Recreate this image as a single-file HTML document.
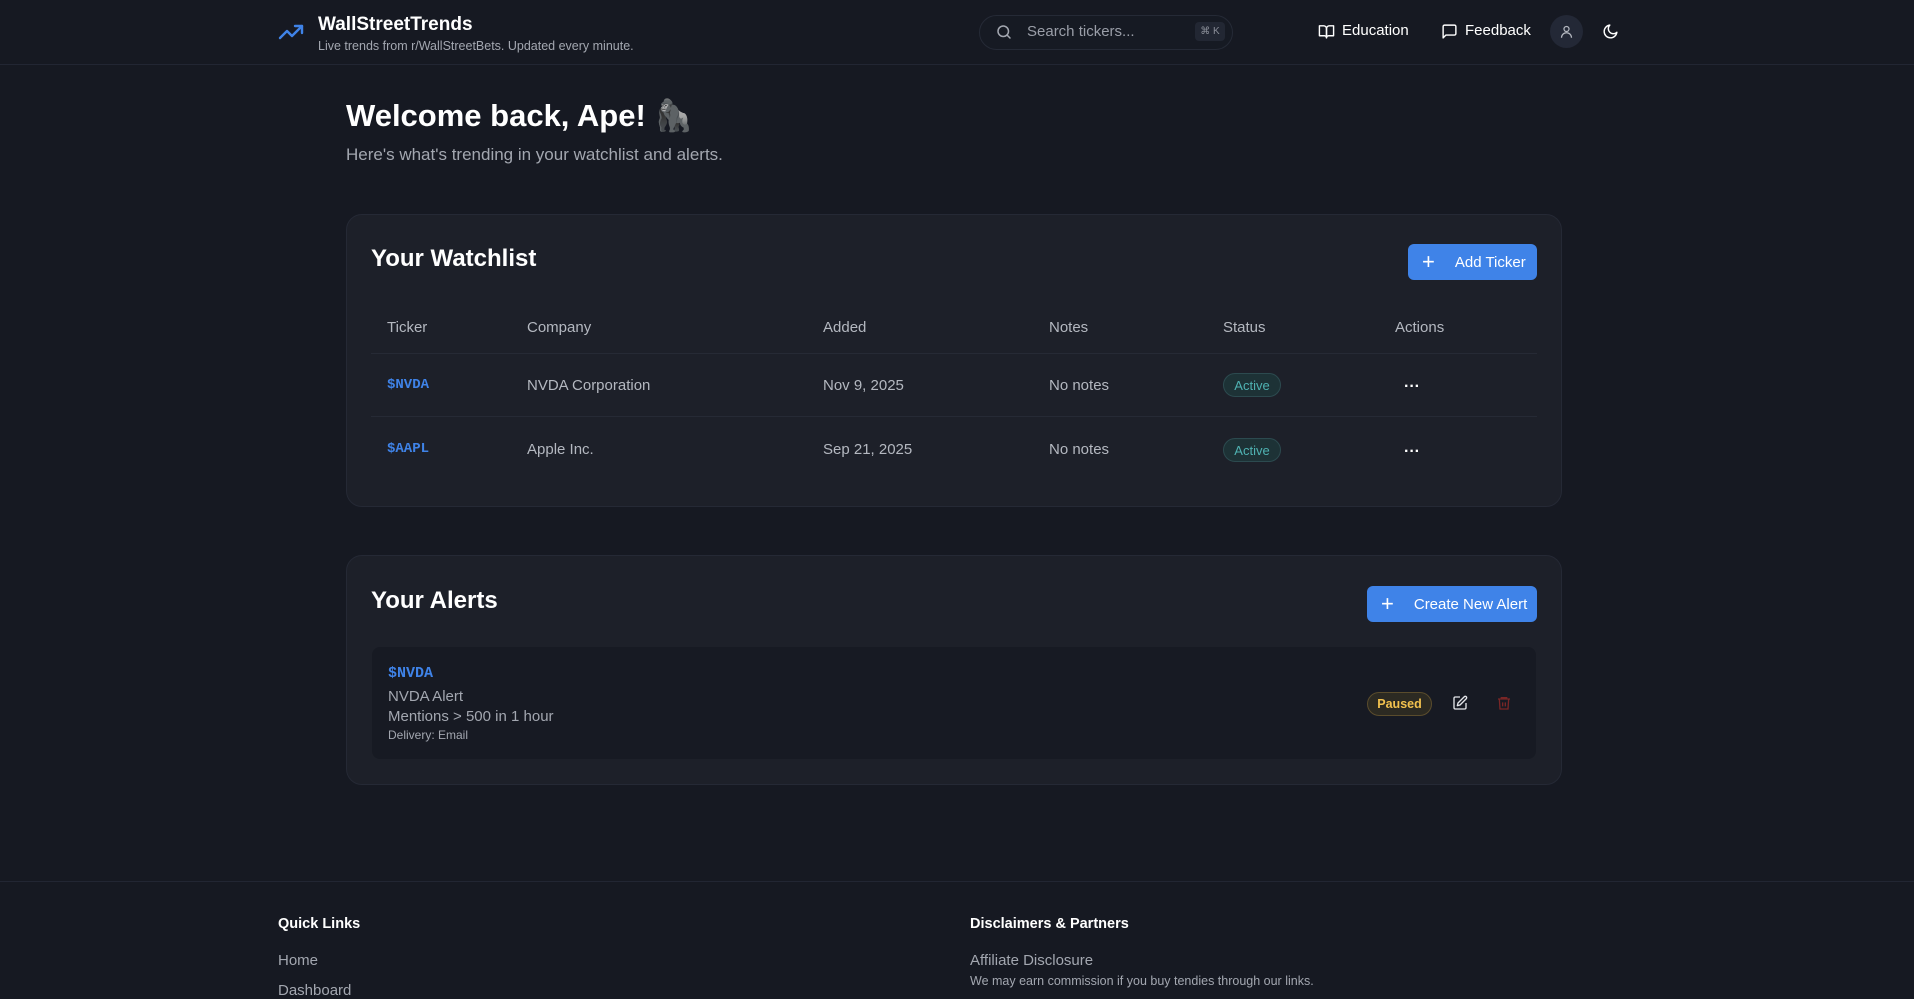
<!DOCTYPE html>
<html><head><meta charset="utf-8"><style>
*{margin:0;padding:0;box-sizing:border-box}
body{width:1914px;height:992px;overflow:hidden;background:#161922;font-family:"Liberation Sans",sans-serif;color:#e5e7eb;position:relative}
.a{position:absolute;white-space:nowrap}
.card{position:absolute;background:#1d2029;border:1px solid #252935;border-radius:16px}
.btn{position:absolute;background:#3f83e8;border-radius:6px;color:#fff;font-size:15px;display:flex;align-items:center}
.th{color:#b4b8c0;font-size:15px}
.td{color:#b4b8c0;font-size:15px}
.tk{color:#3f83e8;font-family:"Liberation Mono",monospace;font-weight:bold;font-size:14px}
.badge{position:absolute;height:24px;border-radius:12px;font-size:13px;display:flex;align-items:center;justify-content:center}
.act{background:#1d3236;border:1px solid #2c4a4f;color:#4fb2b2;width:58px}
.line{position:absolute;height:1px;background:#262a35}
</style></head><body>
<div class="line" style="left:0;top:64px;width:1914px;background:#222633"></div>
<svg class="a" style="left:278px;top:22px" width="28" height="20" viewBox="0 0 28 20" fill="none" stroke="#3f83e8" stroke-width="2.4" stroke-linecap="round" stroke-linejoin="round"><path d="M2 16l7-7 5 5 10-10"/><path d="M17 4h7v7"/></svg>
<div class="a" style="left:318px;top:14px;font-size:19px;font-weight:bold;color:#fff">WallStreetTrends</div>
<div class="a" style="left:318px;top:39px;font-size:12.5px;color:#a3a7b0">Live trends from r/WallStreetBets. Updated every minute.</div>
<div class="a" style="left:979px;top:15px;width:254px;height:35px;border:1px solid #252a36;border-radius:18px;background:#161a23"></div>
<svg class="a" style="left:995px;top:23px" width="18" height="18" viewBox="0 0 24 24" fill="none" stroke="#a3a7b0" stroke-width="2" stroke-linecap="round"><circle cx="11" cy="11" r="7"/><path d="M20 20l-4-4"/></svg>
<div class="a" style="left:1027px;top:23px;font-size:15px;color:#9a9ea8">Search tickers...</div>
<div class="a" style="left:1195px;top:22px;width:30px;height:19px;background:#222733;border-radius:4px;font-size:10px;color:#8a8e98;text-align:center;line-height:19px">⌘ K</div>
<svg class="a" style="left:1318px;top:23px" width="17" height="17" viewBox="0 0 24 24" fill="none" stroke="#fff" stroke-width="2" stroke-linejoin="round"><path d="M2 4h6a4 4 0 0 1 4 4v13a3 3 0 0 0-3-3H2z"/><path d="M22 4h-6a4 4 0 0 0-4 4v13a3 3 0 0 1 3-3h7z"/></svg>
<div class="a" style="left:1342px;top:22px;font-size:15px;color:#fff">Education</div>
<svg class="a" style="left:1441px;top:23px" width="17" height="17" viewBox="0 0 24 24" fill="none" stroke="#fff" stroke-width="2" stroke-linejoin="round"><path d="M21 15a2 2 0 0 1-2 2H7l-4 4V5a2 2 0 0 1 2-2h14a2 2 0 0 1 2 2z"/></svg>
<div class="a" style="left:1465px;top:22px;font-size:15px;color:#fff">Feedback</div>
<div class="a" style="left:1550px;top:15px;width:33px;height:33px;border-radius:50%;background:#232836"></div>
<svg class="a" style="left:1559px;top:24px" width="15" height="15" viewBox="0 0 24 24" fill="none" stroke="#b4b8c0" stroke-width="2"><circle cx="12" cy="8" r="4"/><path d="M4 22a8 8 0 0 1 16 0"/></svg>
<svg class="a" style="left:1602px;top:23px" width="17" height="17" viewBox="0 0 24 24" fill="none" stroke="#fff" stroke-width="2" stroke-linejoin="round"><path d="M21 13A9 9 0 1 1 11 3a7 7 0 0 0 10 10z"/></svg>
<div class="a" style="left:346px;top:97px;font-size:31px;font-weight:bold;color:#fff">Welcome back, Ape! 🦍</div>
<div class="a" style="left:346px;top:145px;font-size:17px;color:#a3a7b0">Here's what's trending in your watchlist and alerts.</div>
<div class="card" style="left:346px;top:214px;width:1216px;height:293px"></div>
<div class="a" style="left:371px;top:245px;font-size:24px;font-weight:bold;color:#fff">Your Watchlist</div>
<div class="btn" style="left:1408px;top:244px;width:129px;height:36px"><span style="margin-left:14px;font-size:22px;font-weight:300">+</span><span style="margin-left:20px">Add Ticker</span></div>
<div class="a th" style="left:387px;top:319px">Ticker</div>
<div class="a th" style="left:527px;top:319px">Company</div>
<div class="a th" style="left:823px;top:319px">Added</div>
<div class="a th" style="left:1049px;top:319px">Notes</div>
<div class="a th" style="left:1223px;top:319px">Status</div>
<div class="a th" style="left:1395px;top:319px">Actions</div>
<div class="line" style="left:371px;top:353px;width:1166px"></div>
<div class="line" style="left:371px;top:416px;width:1166px"></div>
<div class="a tk" style="left:387px;top:377px">$NVDA</div>
<div class="a td" style="left:527px;top:377px">NVDA Corporation</div>
<div class="a td" style="left:823px;top:377px">Nov 9, 2025</div>
<div class="a td" style="left:1049px;top:377px">No notes</div>
<div class="badge act" style="left:1223px;top:373px">Active</div>
<div class="a" style="left:1404px;top:378px;font-size:16px;font-weight:bold;color:#fff">···</div>
<div class="a tk" style="left:387px;top:441px">$AAPL</div>
<div class="a td" style="left:527px;top:441px">Apple Inc.</div>
<div class="a td" style="left:823px;top:441px">Sep 21, 2025</div>
<div class="a td" style="left:1049px;top:441px">No notes</div>
<div class="badge act" style="left:1223px;top:438px">Active</div>
<div class="a" style="left:1404px;top:443px;font-size:16px;font-weight:bold;color:#fff">···</div>
<div class="card" style="left:346px;top:555px;width:1216px;height:230px"></div>
<div class="a" style="left:371px;top:587px;font-size:24px;font-weight:bold;color:#fff">Your Alerts</div>
<div class="btn" style="left:1367px;top:586px;width:170px;height:36px"><span style="margin-left:14px;font-size:22px;font-weight:300">+</span><span style="margin-left:20px">Create New Alert</span></div>
<div class="a" style="left:372px;top:647px;width:1164px;height:112px;background:#171a23;border-radius:8px"></div>
<div class="a" style="left:388px;top:665px;font-size:15px;font-weight:bold;color:#3f83e8;font-family:'Liberation Mono',monospace">$NVDA</div>
<div class="a" style="left:388px;top:688px;font-size:15px;color:#a3a7b0">NVDA Alert</div>
<div class="a" style="left:388px;top:708px;font-size:15px;color:#a3a7b0">Mentions &gt; 500 in 1 hour</div>
<div class="a" style="left:388px;top:728px;font-size:12px;color:#a3a7b0">Delivery: Email</div>
<div class="badge" style="left:1367px;top:692px;width:65px;background:#2c2a22;border:1px solid #5a4c2c;color:#f2c14e;font-weight:bold;font-size:12.5px">Paused</div>
<svg class="a" style="left:1452px;top:695px" width="16" height="16" viewBox="0 0 24 24" fill="none" stroke="#e5e7eb" stroke-width="2" stroke-linejoin="round"><path d="M12 3H5a2 2 0 0 0-2 2v14a2 2 0 0 0 2 2h14a2 2 0 0 0 2-2v-7"/><path d="M18.4 2.6a2 2 0 0 1 3 3L12 15l-4 1 1-4z"/></svg>
<svg class="a" style="left:1496px;top:695px" width="16" height="16" viewBox="0 0 24 24" fill="none" stroke="#7a2626" stroke-width="2"><path d="M3 6h18M8 6V4h8v2M5 6l1 15h12l1-15M10 11v6M14 11v6"/></svg>
<div class="line" style="left:0;top:881px;width:1914px;background:#222633"></div>
<div class="a" style="left:278px;top:916px;font-size:14.5px;font-weight:bold;color:#fff">Quick Links</div>
<div class="a" style="left:278px;top:952px;font-size:15px;color:#a3a7b0">Home</div>
<div class="a" style="left:278px;top:982px;font-size:15px;color:#a3a7b0">Dashboard</div>
<div class="a" style="left:970px;top:916px;font-size:14.5px;font-weight:bold;color:#fff">Disclaimers &amp; Partners</div>
<div class="a" style="left:970px;top:952px;font-size:15px;color:#a3a7b0">Affiliate Disclosure</div>
<div class="a" style="left:970px;top:974px;font-size:12.5px;color:#a3a7b0">We may earn commission if you buy tendies through our links.</div>
</body></html>
